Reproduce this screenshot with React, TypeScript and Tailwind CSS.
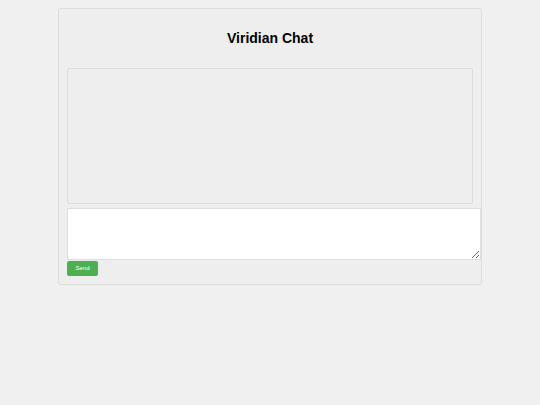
export default function App() {
  return (
    <div className="min-h-screen bg-[#f0f0f0] pt-[8px] font-['Liberation_Sans',Arial,sans-serif]">
      <div className="mx-auto w-[424px] rounded-[3px] border border-[#dddddd] bg-[#eeeeee] px-[8px] pt-[21px] pb-[8px]">
        <h1 className="text-center text-[14px] font-bold leading-[16px] text-black">
          Viridian Chat
        </h1>
        <div className="mt-[22px] h-[136px] w-[406px] rounded-[2px] border border-[#dddddd] bg-[#eeeeee]" />
        <textarea className="mt-[4px] block h-[52px] w-[414px] border border-[#dddddd] bg-white outline-none" />
        <button className="mt-[1px] block h-[15px] w-[31px] rounded-[2px] bg-[#4caf50] text-[6px] font-normal leading-[15px] text-white">
          Send
        </button>
      </div>
    </div>
  );
}
